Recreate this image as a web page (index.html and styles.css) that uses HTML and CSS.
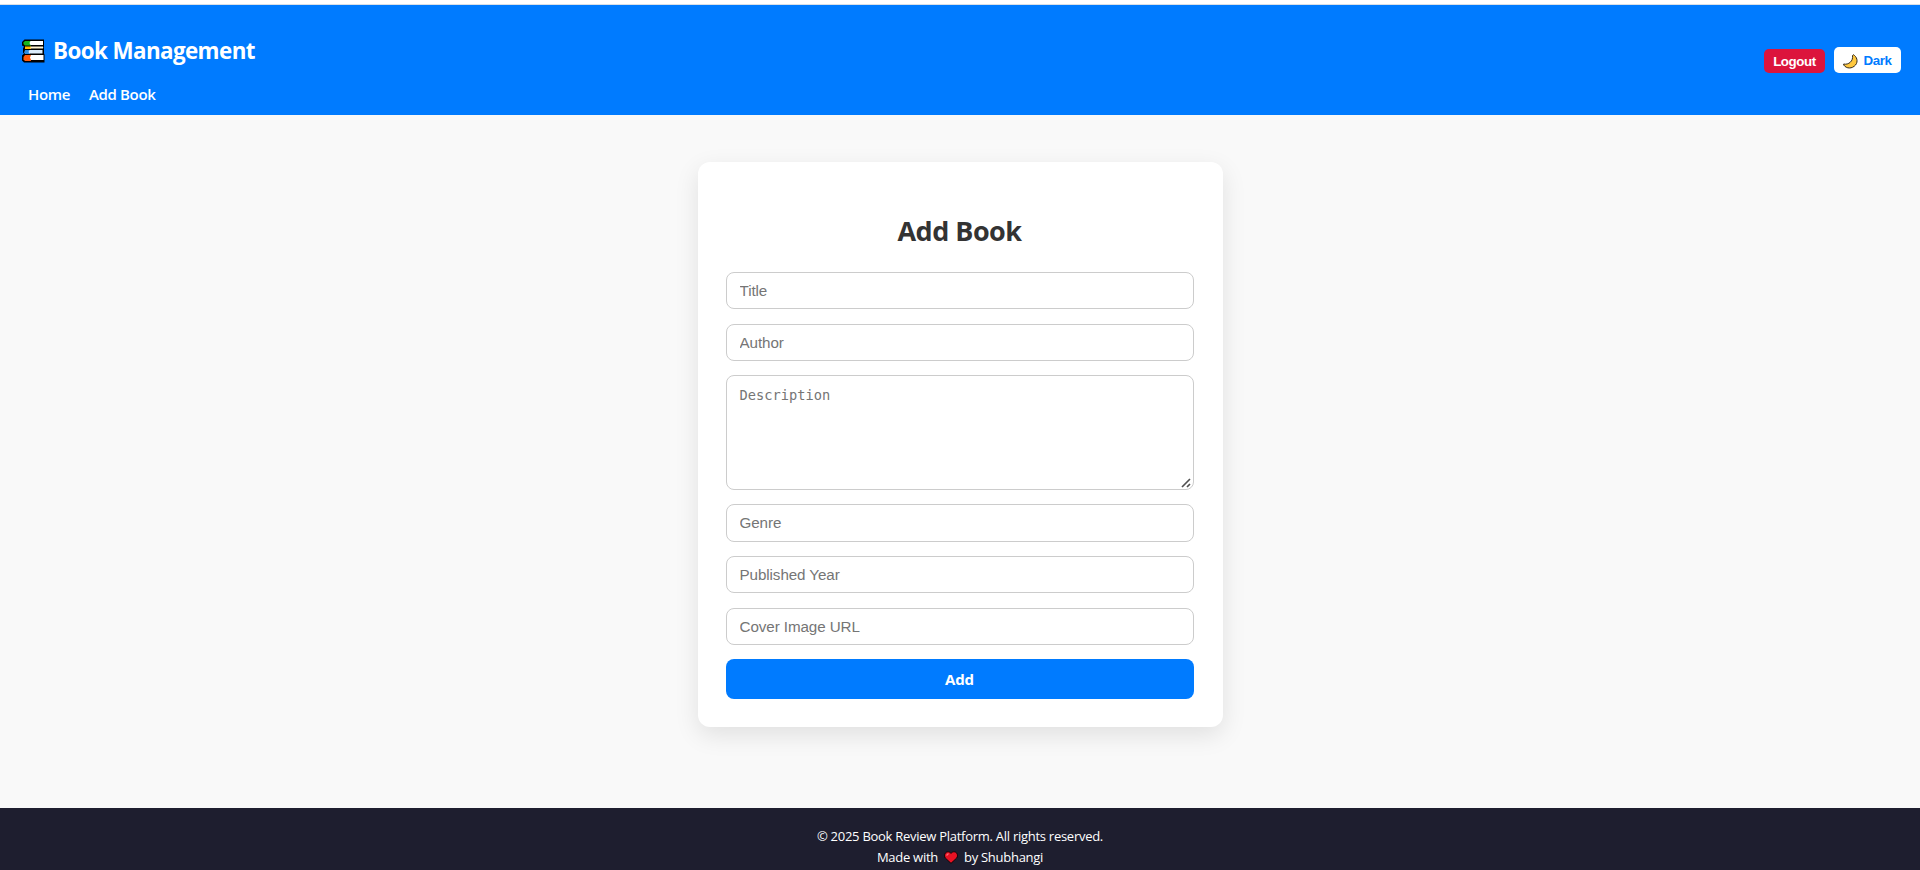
FILE: index.html
```html
<!DOCTYPE html>
<html lang="en">
<head>
<meta charset="utf-8">
<title>Book Management</title>
<link rel="stylesheet" href="styles.css">
</head>
<body>
<div class="page">
  <header class="navbar">
    <div class="nav-left">
      <div class="brand">
        <svg class="books" viewBox="0 0 24 24" width="24" height="24">
          <path fill="#000" d="M3.500.5H23v7l-.5 1 .5 1v5l.5 1v8H3l-2-2v-5l2-2-1-1v-4l1-2-2-1V3z"/>
          <path fill="#16b51c" d="M4 2h6v4.500H4L2.500 5V3.500z"/>
          <path fill="#fff" d="M9.500 2H22v4H9.500L8.500 4z"/>
          <path fill="#ffb900" d="M4 7.500h6V10H4z"/>
          <path fill="#fff3d0" d="M9.500 7.500H22V9.500H9.500z"/>
          <path fill="#2f8de0" d="M4 11h5v4H4L3 13.500z"/>
          <path fill="#dcecfb" d="M8.500 11H21.500v3.500H8.500L7.500 13z"/>
          <path fill="#ff5a0a" d="M4 16h6v6H4l-1.500-1.500V18z"/>
          <path fill="#fff" d="M10 16h12.500v5H10L9 18.500z"/>
        </svg>
        <span class="brand-text">Book Management</span>
      </div>
      <nav class="links"><a class="home">Home</a><a class="add-link">Add Book</a></nav>
    </div>
    <div class="nav-right">
      <button class="logout">Logout</button>
      <button class="theme">
        <svg class="moon" viewBox="0 0 15 15" width="15" height="15">
          <path fill="#ffc83d" stroke="#33291a" stroke-width="1" stroke-linejoin="round" d="M10.300.7C13.800 2.500 15.500 7.500 12.500 11 9.200 14.900 3.500 15 .7 11v-1C5.500 11.200 10.500 7 9.500 1.500z"/>
        </svg>
        <span>Dark</span>
      </button>
    </div>
  </header>
  <main class="content">
    <form class="card">
      <h2 class="heading"><span>Add Book</span></h2>
      <input class="field" type="text" placeholder="Title">
      <input class="field" type="text" placeholder="Author">
      <div class="area-wrap">
        <textarea class="field area" placeholder="Description"></textarea>
        <svg class="grip" viewBox="0 0 10 10" width="10" height="10"><path d="M1 9 9 1M6 9 9 6" stroke="#505050" stroke-width="1.700" fill="none"/></svg>
      </div>
      <input class="field genre" type="text" placeholder="Genre">
      <input class="field" type="text" placeholder="Published Year">
      <input class="field cover" type="text" placeholder="Cover Image URL">
      <button class="submit" type="button">Add</button>
    </form>
  </main>
  <footer class="footer">
    <p class="copy">© 2025 Book Review Platform. All rights reserved.</p>
    <p class="made"><span>Made with</span>
      <svg class="heart" viewBox="0 0 14 13" width="14" height="13"><path fill="#e81224" stroke="#000" stroke-width=".8" d="M7 12.300 1.300 7C-.5 4.500 1 .8 4 .8c1.300 0 2.300.6 3 1.600.7-1 1.700-1.600 3-1.600 3 0 4.500 3.700 2.700 6.200z"/><path d="M2.500 4.500 4.500 2.500" stroke="#ff6a74" stroke-width="1.200"/></svg>
      <span>by Shubhangi</span></p>
  </footer>
</div>
</body>
</html>
```
FILE: styles.css
```css
* { box-sizing: border-box; }
body {
  margin: 0;
  background: #f9f9f9;
  font-family: "Open Sans", "Noto Sans", sans-serif;
}
.page {
  height: 870px;
  display: flex;
  flex-direction: column;
  overflow: hidden;
  border-top: 4px solid #fff;
}
.navbar {
  height: 111px;
  flex: none;
  display: flex;
  justify-content: space-between;
  background: #007bff;
  border-top: 1px solid #d9dfe6;
  padding: 0 19px 0 21px;
  color: #fff;
}
.nav-left { padding-top: 30px; }
.brand {
  display: flex;
  align-items: center;
  height: 32px;
  gap: 8px;
  font-size: 22.4px;
  font-weight: 700;
  white-space: nowrap;
}
.brand-text { letter-spacing: -0.6px; line-height: 30px; padding-bottom: 1px; }
.links {
  display: flex;
  gap: 19px;
  padding: 17px 0 0 7px;
  font-size: 15px;
  font-weight: 600;
  line-height: 20px;
  letter-spacing: -0.35px;
}
.nav-right {
  display: flex;
  align-items: flex-end;
  gap: 9px;
  height: 68px;
}
.nav-right button {
  border: 0;
  border-radius: 5px;
  padding: 0;
  font: 700 13.333px "Liberation Sans", Arial, sans-serif;
  letter-spacing: -0.4px;
}
.logout { width: 61px; height: 24px; background: #dc143c; color: #fff; }
.theme {
  width: 67px;
  height: 26px;
  display: flex;
  align-items: center;
  justify-content: center;
  gap: 5px;
  background: #fff;
  color: #007bff;
}
.moon { position: relative; top: 1px; }
.content {
  height: 693px;
  flex: none;
  display: flex;
  justify-content: center;
  align-items: flex-start;
  padding-top: 47px;
}
.card {
  width: 525px;
  height: 565px;
  padding: 49px 29px 28px 28px;
  display: flex;
  flex-direction: column;
  background: #fff;
  border-radius: 12px;
  box-shadow: 0 8px 24px rgba(0, 0, 0, 0.1);
}
.heading {
  margin: 0 0 21px;
  height: 40px;
  font-size: 27px;
  line-height: 40px;
  letter-spacing: -0.5px;
  text-align: center;
  color: #333;
}
.field {
  width: 468px;
  height: 37px;
  flex: none;
  margin: 0 0 15px;
  padding: 0 13px;
  border: 1px solid #ccc;
  border-radius: 8px;
  background: #fff;
  font: 15.2px "Liberation Sans", Arial, sans-serif;
  letter-spacing: -0.08px;
}
.field::placeholder { color: #757575; }
.area-wrap { position: relative; height: 115px; flex: none; margin: -1px 0 14px; }
.area {
  display: block;
  height: 115px;
  margin: 0;
  padding: 11px 13px;
  resize: none;
  font: 13.7px/17px "DejaVu Sans Mono", monospace;
  letter-spacing: 0;
}
.grip { position: absolute; right: 3px; bottom: 2px; }
.genre { height: 38px; margin-bottom: 14px; padding-bottom: 2px; }
.cover { margin-bottom: 14px; }
.submit {
  height: 40px;
  width: 468px;
  border: 0;
  border-radius: 8px;
  background: #007bff;
  color: #fff;
  font: 700 15px "Open Sans", sans-serif;
  letter-spacing: -0.1px;
}
.footer {
  height: 62px;
  flex: none;
  padding-top: 18px;
  background: #1e1e2f;
  color: #fff;
  font-size: 13px;
  line-height: 21px;
  letter-spacing: -0.27px;
  text-align: center;
}
.footer p { margin: 0; }
.made { display: flex; justify-content: center; align-items: center; gap: 6px; }
```
